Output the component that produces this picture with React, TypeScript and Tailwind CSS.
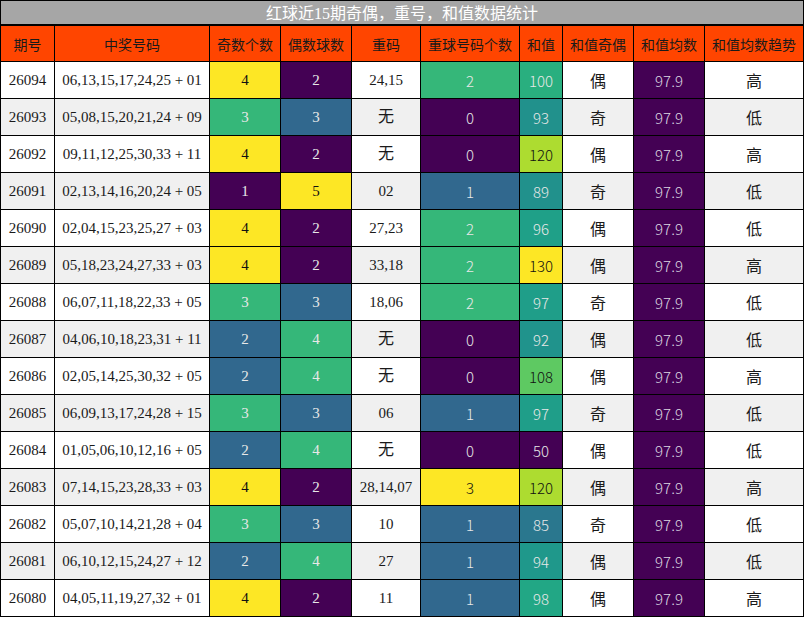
import React from "react";

type Row = {
  id: string;
  nums: string;
  odd: number;
  even: number;
  rep: string;
  repCount: number;
  sum: number;
  sumCls: string;
  parity: string;
  trend: string;
};

const rows: Row[] = [
  { id: "26094", nums: "06,13,15,17,24,25 + 01", odd: 4, even: 2, rep: "24,15", repCount: 2, sum: 100, sumCls: "bg-[#29af7f] text-[#e8e8e8]", parity: "偶", trend: "高" },
  { id: "26093", nums: "05,08,15,20,21,24 + 09", odd: 3, even: 3, rep: "无", repCount: 0, sum: 93, sumCls: "bg-[#21918c] text-[#e8e8e8]", parity: "奇", trend: "低" },
  { id: "26092", nums: "09,11,12,25,30,33 + 11", odd: 4, even: 2, rep: "无", repCount: 0, sum: 120, sumCls: "bg-[#addc30] text-[#111111]", parity: "偶", trend: "高" },
  { id: "26091", nums: "02,13,14,16,20,24 + 05", odd: 1, even: 5, rep: "02", repCount: 1, sum: 89, sumCls: "bg-[#21918c] text-[#e8e8e8]", parity: "奇", trend: "低" },
  { id: "26090", nums: "02,04,15,23,25,27 + 03", odd: 4, even: 2, rep: "27,23", repCount: 2, sum: 96, sumCls: "bg-[#1fa088] text-[#e8e8e8]", parity: "偶", trend: "低" },
  { id: "26089", nums: "05,18,23,24,27,33 + 03", odd: 4, even: 2, rep: "33,18", repCount: 2, sum: 130, sumCls: "bg-[#fde725] text-[#111111]", parity: "偶", trend: "高" },
  { id: "26088", nums: "06,07,11,18,22,33 + 05", odd: 3, even: 3, rep: "18,06", repCount: 2, sum: 97, sumCls: "bg-[#1f9e89] text-[#e8e8e8]", parity: "奇", trend: "低" },
  { id: "26087", nums: "04,06,10,18,23,31 + 11", odd: 2, even: 4, rep: "无", repCount: 0, sum: 92, sumCls: "bg-[#20938c] text-[#e8e8e8]", parity: "偶", trend: "低" },
  { id: "26086", nums: "02,05,14,25,30,32 + 05", odd: 2, even: 4, rep: "无", repCount: 0, sum: 108, sumCls: "bg-[#5ec962] text-[#111111]", parity: "偶", trend: "高" },
  { id: "26085", nums: "06,09,13,17,24,28 + 15", odd: 3, even: 3, rep: "06", repCount: 1, sum: 97, sumCls: "bg-[#1f9e89] text-[#e8e8e8]", parity: "奇", trend: "低" },
  { id: "26084", nums: "01,05,06,10,12,16 + 05", odd: 2, even: 4, rep: "无", repCount: 0, sum: 50, sumCls: "bg-[#440154] text-[#e8e8e8]", parity: "偶", trend: "低" },
  { id: "26083", nums: "07,14,15,23,28,33 + 03", odd: 4, even: 2, rep: "28,14,07", repCount: 3, sum: 120, sumCls: "bg-[#addc30] text-[#111111]", parity: "偶", trend: "高" },
  { id: "26082", nums: "05,07,10,14,21,28 + 04", odd: 3, even: 3, rep: "10", repCount: 1, sum: 85, sumCls: "bg-[#2a778e] text-[#e8e8e8]", parity: "奇", trend: "低" },
  { id: "26081", nums: "06,10,12,15,24,27 + 12", odd: 2, even: 4, rep: "27", repCount: 1, sum: 94, sumCls: "bg-[#1f988b] text-[#e8e8e8]", parity: "偶", trend: "低" },
  { id: "26080", nums: "04,05,11,19,27,32 + 01", odd: 4, even: 2, rep: "11", repCount: 1, sum: 98, sumCls: "bg-[#22a785] text-[#e8e8e8]", parity: "偶", trend: "高" },
];

// 4-level viridis classes, index 0..3
const levels = [
  "bg-[#440154] text-[#e8e8e8]",
  "bg-[#31688e] text-[#e8e8e8]",
  "bg-[#35b779] text-[#e8e8e8]",
  "bg-[#fde725] text-[#111111]",
];

const headers = ["期号", "中奖号码", "奇数个数", "偶数球数", "重码", "重球号码个数", "和值", "和值奇偶", "和值均数", "和值均数趋势"];

const serif = "font-['Liberation_Serif','Noto_Sans_CJK_SC',serif]";
const sans = "font-['Noto_Sans_CJK_SC',sans-serif]";
const cell = "flex items-center justify-center text-[15px] leading-none";

export default function App() {
  return (
    <div className="w-[804px] h-[617px] bg-black p-px">
      <div className={`h-[23px] mb-[2px] bg-[#a6a6a6] flex items-center justify-center text-white text-[16px] leading-none pt-[2px] ${serif}`}>
        红球近15期奇偶，重号，和值数据统计
      </div>
      <div className="grid grid-cols-[53px_154px_70px_70px_68px_98px_42px_70px_70px_98px] grid-rows-[35px_repeat(15,36px)] gap-px">
        {headers.map((h) => (
          <div key={h} className={`bg-[#ff4500] flex items-center justify-center text-[14px] text-[#1a1a1a] leading-none ${sans}`}>
            {h}
          </div>
        ))}
        {rows.map((r, i) => {
          const bg = i % 2 === 1 ? "bg-[#f0f0f0]" : "bg-white";
          return (
            <React.Fragment key={r.id}>
              <div className={`${cell} ${bg} ${serif} text-[#1a1a1a]`}>{r.id}</div>
              <div className={`${cell} ${bg} ${serif} text-[#1a1a1a]`}>{r.nums}</div>
              <div className={`${cell} ${serif} ${levels[r.odd - 1]}`}>{r.odd}</div>
              <div className={`${cell} ${serif} ${levels[r.even - 2]}`}>{r.even}</div>
              <div className={`${cell} ${bg} ${serif} text-[#1a1a1a] ${r.rep === "无" ? "text-[16px]" : ""}`}>{r.rep}</div>
              <div className={`${cell} ${sans} font-light ${levels[r.repCount]}`}>{r.repCount}</div>
              <div className={`${cell} ${sans} font-light ${r.sumCls}`}>{r.sum}</div>
              <div className={`${cell} ${bg} ${sans} text-[16px] text-[#1a1a1a]`}>{r.parity}</div>
              <div className={`${cell} ${sans} font-light bg-[#440154] text-[#dcd8e2]`}>97.9</div>
              <div className={`${cell} ${bg} ${sans} text-[16px] text-[#1a1a1a]`}>{r.trend}</div>
            </React.Fragment>
          );
        })}
      </div>
    </div>
  );
}
